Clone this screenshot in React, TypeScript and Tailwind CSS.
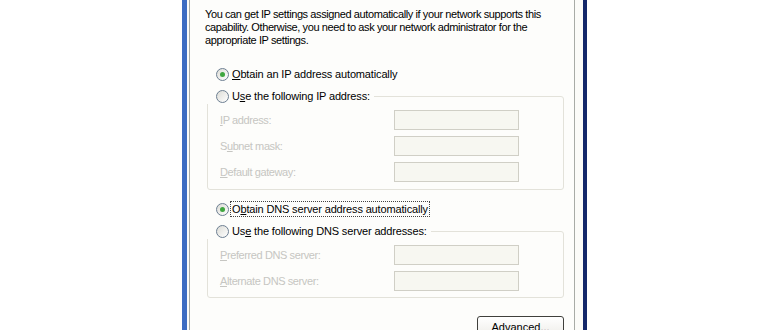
import React from "react";

const font = { fontFamily: '"Liberation Sans", Arial, sans-serif' };

function Radio({ checked }: { checked?: boolean }) {
  return (
    <span className="relative flex h-[13px] w-[13px] shrink-0 items-center justify-center rounded-full border border-[#6d7f92] bg-gradient-to-br from-[#dcdcd6] to-[#ffffff]">
      {checked && <span className="h-[5px] w-[5px] rounded-full bg-[#3fa63f]" />}
    </span>
  );
}

function RadioRow({ checked, children, focus, bg }: { checked?: boolean; children: React.ReactNode; focus?: boolean; bg?: boolean }) {
  return (
    <div className={"flex h-[16px] items-center gap-[2px] self-start pl-[11px] pr-[3px] tracking-[-0.15px] " + (bg ? "bg-[#fdfdfb]" : "")}>
      <Radio checked={checked} />
      <span className={"px-[1px] leading-[14px] " + (focus ? "outline outline-1 outline-dotted outline-[#444]" : "")}>{children}</span>
    </div>
  );
}

function Field({ label }: { label: React.ReactNode }) {
  return (
    <div className="flex h-[20px] items-center">
      <span className="w-[174px] text-[#c6c6c2]">{label}</span>
      <div className="h-[20px] w-[125px] border border-[#d0cfc6] bg-[#f7f7f1]" />
    </div>
  );
}

export default function App() {
  return (
    <div className="h-[330px] w-[770px] overflow-hidden bg-white text-[11px] text-black" style={font}>
      <div className="ml-[182px] flex h-[330px] w-[405px] border-l-[5px] border-r-[4px] border-l-[#3d6cc2] border-r-[#14286a] bg-[#fbfbf8]">
        <div className="ml-[2px] mr-[8px] flex h-full flex-1 flex-col border-x border-x-[#a8aba6] bg-[#fdfdfb] pl-[15px] pr-[10px] tracking-[-0.4px]">
          <p className="mt-[8px] leading-[13px]">
            You can get IP settings assigned automatically if your network supports this capability. Otherwise, you need to ask your network administrator for the appropriate IP settings.
          </p>

          <div className="mt-[19px] flex flex-col">
            <RadioRow checked>
              <span className="underline">O</span>btain an IP address automatically
            </RadioRow>
            <div className="ml-[2px] mt-[14px] flex flex-col rounded-[3px] border border-[#e3e2da] pb-[7px] pl-[12px]">
              <div className="-ml-[15px] -mt-[9px] flex">
                <RadioRow bg>
                  U<span className="underline">s</span>e the following IP address:
                </RadioRow>
              </div>
              <div className="mt-[6px] flex flex-col gap-[6px]">
                <Field label={<><span className="underline">I</span>P address:</>} />
                <Field label={<>S<span className="underline">u</span>bnet mask:</>} />
                <Field label={<><span className="underline">D</span>efault gateway:</>} />
              </div>
            </div>
          </div>

          <div className="mt-[11px] flex flex-col">
            <RadioRow checked focus>
              O<span className="underline">b</span>tain DNS server address automatically
            </RadioRow>
            <div className="ml-[2px] mt-[14px] flex flex-col rounded-[3px] border border-[#e3e2da] pb-[6px] pl-[12px]">
              <div className="-ml-[15px] -mt-[9px] flex">
                <RadioRow bg>
                  Us<span className="underline">e</span> the following DNS server addresses:
                </RadioRow>
              </div>
              <div className="mt-[6px] flex flex-col gap-[6px]">
                <Field label={<><span className="underline">P</span>referred DNS server:</>} />
                <Field label={<><span className="underline">A</span>lternate DNS server:</>} />
              </div>
            </div>
          </div>

          <div className="mt-[18px] flex justify-end">
            <button className="h-[23px] w-[87px] rounded-[3px] border border-[#40403c] bg-gradient-to-b from-white to-[#ecebe6] text-[11px] tracking-normal text-black">
              Ad<span className="underline">v</span>anced...
            </button>
          </div>
        </div>
      </div>
    </div>
  );
}
